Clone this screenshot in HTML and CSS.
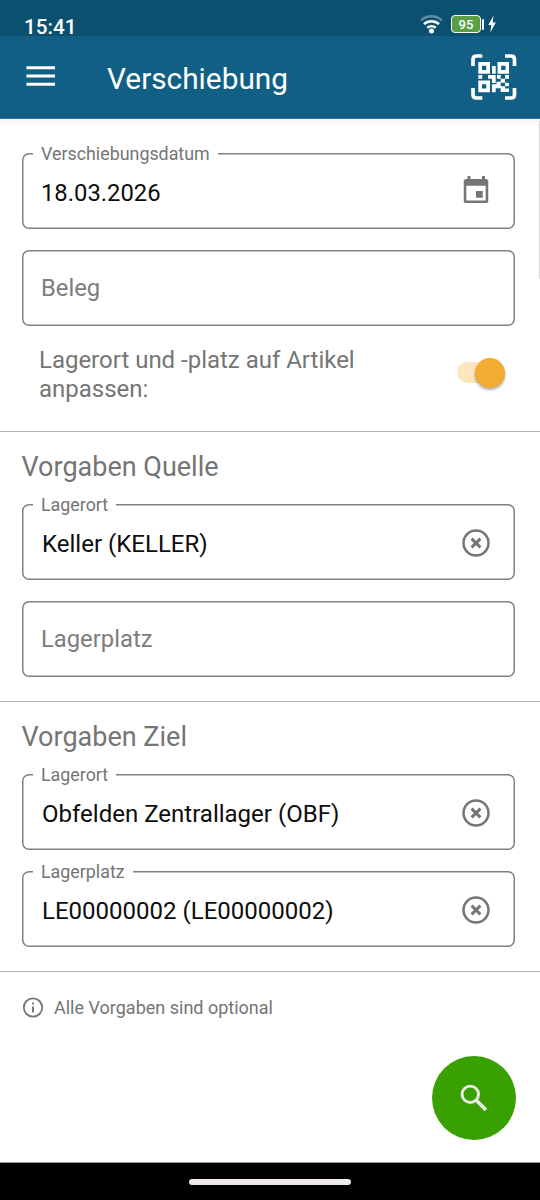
FILE: index.html
```html
<!DOCTYPE html>
<html lang="de">
<head>
<meta charset="utf-8">
<title>Verschiebung</title>
<link rel="stylesheet" href="styles.css">
</head>
<body>
<svg class="defs" width="0" height="0">
  <symbol id="clear" viewBox="0 0 28 28">
    <circle cx="14" cy="14" r="12.5" fill="none" stroke="currentColor" stroke-width="2.5"/>
    <path d="M9.600 9.600l8.800 8.800M18.400 9.600l-8.800 8.800" stroke="currentColor" stroke-width="2.900"/>
  </symbol>
</svg>
<div class="screen">
  <header class="statusbar">
    <span class="clock">15:41</span>
    <div class="status-icons">
      <svg width="24" height="20" viewBox="0 0 24 20" fill="none" stroke="#fff" stroke-width="2.500">
        <path d="M1.200 6.400a15 15 0 0 1 20.600 0" stroke-opacity=".35"/>
        <path d="M4 10.100a11 11 0 0 1 15 0"/>
        <path d="M7.200 13.800a6.400 6.400 0 0 1 8.600 0"/>
        <circle cx="11.500" cy="17" r="2.500" fill="#fff" stroke="none"/>
      </svg>
      <span class="battery">95</span>
      <svg class="bolt" width="8" height="18" viewBox="0 0 8 18"><path d="M5.600 0.500L0.300 10h3L2.300 17.500L7.800 7.400H4.600z" fill="#fff"/></svg>
    </div>
  </header>
  <div class="appbar">
    <svg class="menu" width="29" height="20" viewBox="0 0 29 20"><path d="M.5 1.800h28.500M.5 10h28.500M.5 18.200h28.500" stroke="#fff" stroke-width="2.900"/></svg>
    <h1>Verschiebung</h1>
    <svg class="qr" width="46" height="46" viewBox="0 0 46 46" fill="#fff">
      <path d="M2 12V5.500Q2 2 5.500 2H11.300M34 2H40Q43.500 2 43.500 5.500V12M43.500 34V40.500Q43.500 44 40 44H34M11.300 44H5.500Q2 44 2 40.500V34" fill="none" stroke="#fff" stroke-width="3.700"/>
      <path fill-rule="evenodd" d="M7.300 8h11.700v11.700h-11.700zM11 11.700v4.300h4.300v-4.300zM26.500 8h11.500v11.700h-11.500zM30.200 11.700v4.300h4.300v-4.300zM7.300 26.500h11.700v11.700h-11.700zM11 30.200v4.300h4.300v-4.300z"/>
      <path d="M21 12h3.700v7.700h-3.700zM7.300 21h3.900v3.700H7.300zM17 21h7.700v8h-3.700v-4.300h-4zM26 21h3.700v3.700h-3.700zM34 21h4v3.700h-4zM29.700 24.700h4.300v4h-4.300zM25.500 27.800h4.200v3.200h-4.200zM34 28.700h4v3.500h-4zM21 30.300h8.700v3.900h-5v4h-3.700zM29.700 32.200h4.300v5.900h-4.300zM34 34.500h4v3.500h-4z"/>
    </svg>
  </div>
  <main class="content">
    <section class="section general">
      <div class="field">
        <span class="label">Verschiebungsdatum</span>
        <span class="value date">18.03.2026</span>
        <svg class="calendar" width="26" height="29" viewBox="0 0 26 30" fill="#757575">
          <path fill-rule="evenodd" d="M4.200 0h3v3h12V0h3v3H23q2.700 0 2.700 2.700v19.600q0 2.700-2.700 2.700H3Q.3 28 .3 25.300V5.700Q.3 3 3 3h1.200zM3 10v14.700q0 .6.600.6h18.800q.6 0 .6-.6V10z"/>
          <path d="M13 15.500h7v7h-7z"/>
        </svg>
      </div>
      <div class="field"><span class="value placeholder">Beleg</span></div>
      <div class="switch-row">
        <span class="switch-label">Lagerort und -platz auf Artikel<br>anpassen:</span>
        <span class="switch"><span class="thumb"></span></span>
      </div>
    </section>
    <section class="section">
      <h2>Vorgaben Quelle</h2>
      <div class="field">
        <span class="label">Lagerort</span>
        <span class="value">Keller (KELLER)</span>
        <svg class="clear"><use href="#clear"/></svg>
      </div>
      <div class="field"><span class="value placeholder">Lagerplatz</span></div>
    </section>
    <section class="section">
      <h2>Vorgaben Ziel</h2>
      <div class="field">
        <span class="label">Lagerort</span>
        <span class="value">Obfelden Zentrallager (OBF)</span>
        <svg class="clear"><use href="#clear"/></svg>
      </div>
      <div class="field">
        <span class="label">Lagerplatz</span>
        <span class="value">LE00000002 (LE00000002)</span>
        <svg class="clear"><use href="#clear"/></svg>
      </div>
    </section>
    <div class="hint">
      <svg width="22" height="22" viewBox="0 0 22 22"><circle cx="11" cy="10.500" r="9.200" fill="none" stroke="#757575" stroke-width="1.800"/><path d="M11 9.500v6M11 5.500v2" stroke="#757575" stroke-width="1.900"/></svg>
      <span>Alle Vorgaben sind optional</span>
    </div>
    <i class="scrollbar"></i>
    <button class="fab" aria-label="Suchen">
      <svg width="28" height="28" viewBox="0 0 28 28" fill="none" stroke="#e8ebe6"><circle cx="10.300" cy="10.300" r="8.200" stroke-width="2.900"/><path d="M16 16l10 10" stroke-width="3.700"/></svg>
    </button>
  </main>
  <footer class="navbar"><span class="handle"></span></footer>
</div>
</body>
</html>
```
FILE: styles.css
```css
* { box-sizing: border-box; }
body { margin: 0; font-family: Roboto, sans-serif; background: #fff; }
.defs { position: absolute; }
.screen { width: 540px; height: 1200px; display: flex; flex-direction: column; overflow: hidden; }

.statusbar { flex: none; height: 36px; background: #0c5070; color: #fff; display: flex; justify-content: space-between; padding: 0 44px 0 24px; }
.clock { font-size: 20.700px; font-weight: 500; line-height: 24px; margin-top: 15px; }
.status-icons { display: flex; align-items: flex-start; padding-top: 14px; }
.status-icons > svg { flex: none; }
.battery { position: relative; width: 30px; height: 18px; margin: 1px 0 0 7px; border: 1px solid #fff; border-radius: 4px; background: #5a9e45; font-size: 13px; font-weight: 500; line-height: 17px; text-align: center; }
.battery::after { content: ""; position: absolute; left: 30px; top: 3px; width: 2px; height: 11px; background: #fff; border-radius: 1px; }
.bolt { margin: 1px 0 0 7px; }

.appbar { flex: none; height: 83px; background: #125f85; border-bottom: 1px solid #397998; color: #fff; display: flex; align-items: flex-start; padding: 0 23px 0 26px; }
.menu { margin-top: 30px; }
h1 { margin: 25px 0 0 52px; font-size: 29.800px; font-weight: 400; line-height: 36px; flex: 1; }
.qr { margin-top: 18px; }

.content { position: relative; flex: 1; background: linear-gradient(#f3f3f3, #fff 6px); }
.section { border-bottom: 1px solid #b3b3b3; height: 270px; padding: 18px 25px 0 22px; }
.general { height: 313px; padding-top: 34px; }
h2 { margin: 0 0 20px -0.500px; font-size: 27px; font-weight: 400; line-height: 34px; color: #757575; }
.field { position: relative; height: 76px; margin-bottom: 21px; border-radius: 7px; box-shadow: inset 0 0 0 1.500px #808080; display: flex; align-items: center; justify-content: space-between; padding: 0 25px 0 20px; }
.label { position: absolute; left: 11px; top: -10px; padding: 0 8px; background: #fff; color: #757575; font-size: 17.850px; line-height: 22px; }
.value { font-size: 24.020px; line-height: 30px; color: #0d0d0d; padding-top: 4px; }
.value.date { margin-left: -1px; font-size: 23.800px; padding-top: 3px; }
.value.placeholder { margin-left: -1px; color: #7d7d7d; font-size: 23.800px; padding-top: 0; }
.calendar { margin-right: 1px; margin-top: -2px; }
.clear { width: 28px; height: 28px; margin-top: 1px; color: #757575; }
.switch-row { display: flex; justify-content: space-between; padding: 0 10px 0 17px; margin-top: -1px; }
.switch-label { color: #757575; font-size: 23.970px; line-height: 29px; margin-top: -0.500px; }
.switch { width: 48px; height: 21px; border-radius: 11px; background: #fde5bd; margin-top: 16px; display: flex; justify-content: flex-end; align-items: center; }
.thumb { flex: none; width: 30px; height: 30px; border-radius: 50%; background: #f3ac31; box-shadow: 0 2px 3px #0005; }
.hint { display: flex; align-items: center; gap: 10px; padding: 25px 22px; color: #757575; font-size: 18px; line-height: 22px; }
.scrollbar { position: absolute; right: 0; top: 2px; width: 1px; height: 158px; background: #d6d6d6; }
.fab { position: absolute; left: 432px; top: 937px; width: 84px; height: 84px; border: 0; padding: 0; border-radius: 50%; background: #38a000; display: flex; align-items: center; justify-content: center; }

.navbar { flex: none; height: 38px; background: #000; border-top: 1px solid #999; display: flex; justify-content: center; align-items: center; }
.handle { width: 162px; height: 6px; border-radius: 3px; background: #ece8ec; }
```
